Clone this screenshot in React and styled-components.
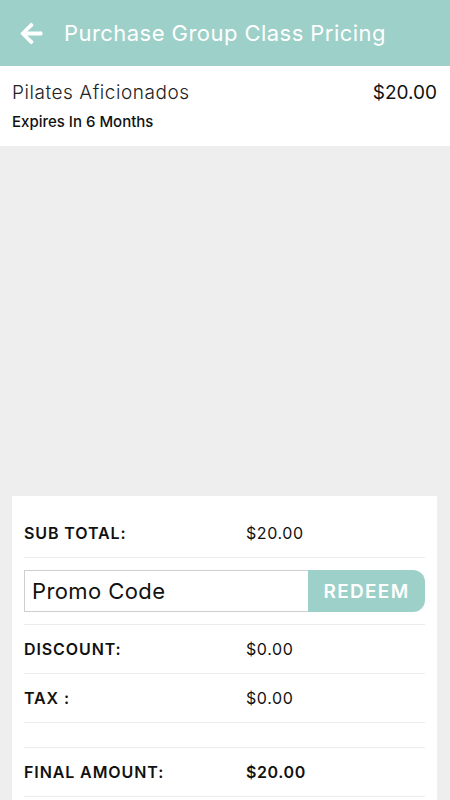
import React from "react";
import styled, { createGlobalStyle } from "styled-components";
import { FaArrowLeft } from "react-icons/fa";

const Global = createGlobalStyle`
  html, body { margin: 0; padding: 0; background: #eeeeee; }
  body { font-family: Inter, "Noto Sans", sans-serif; color: #111; }
  * { box-sizing: border-box; }
`;

const Page = styled.div`
  width: 450px;
  height: 800px;
  background: #eeeeee;
  display: flex;
  flex-direction: column;
  overflow: hidden;
`;

const Header = styled.header`
  height: 66px;
  background: #9dd0c8;
  display: flex;
  align-items: center;
  padding-left: 19px;
  gap: 20px;
  color: #fff;
  flex-shrink: 0;
`;

const BackButton = styled.button`
  border: 0;
  background: none;
  padding: 0;
  color: #fff;
  display: flex;
  align-items: center;
  font-size: 25px;
`;

const Title = styled.h1`
  margin: 0;
  font-size: 22px;
  font-weight: 400;
  letter-spacing: 0.45px;
`;

const Item = styled.section`
  height: 80px;
  background: #fff;
  padding: 15px 13px 0 12px;
  flex-shrink: 0;
`;

const ItemTop = styled.div`
  display: flex;
  justify-content: space-between;
  align-items: baseline;
`;

const ItemName = styled.div`
  font-size: 19px;
  font-weight: 300;
  color: #222;
  letter-spacing: 0.55px;
`;

const ItemPrice = styled.div`
  font-size: 19px;
  font-weight: 400;
  color: #111;
`;

const ItemSub = styled.div`
  margin-top: 8px;
  font-size: 15px;
  font-weight: 500;
  color: #111;
`;

const Spacer = styled.div`
  flex: 1;
`;

const Card = styled.section`
  background: #fff;
  margin: 0 13px 0 12px;
  padding: 12px 12px 0;
  height: 304px;
  flex-shrink: 0;
`;

const Row = styled.div`
  display: grid;
  grid-template-columns: 222px 1fr;
  align-items: center;
  height: ${(p) => p.$h || 50}px;
  border-bottom: 1px solid #ececec;
  font-size: 16px;
`;

const Label = styled.div`
  font-weight: 600;
  color: #111;
  letter-spacing: 0.9px;
`;

const Value = styled.div`
  font-weight: ${(p) => (p.$bold ? 600 : 400)};
  color: #111;
  letter-spacing: 0.6px;
`;

const PromoRow = styled.div`
  height: 67px;
  display: flex;
  align-items: center;
  border-bottom: 1px solid #ececec;
`;

const PromoInput = styled.input`
  flex: 1;
  min-width: 0;
  width: 0;
  height: 42px;
  border: 1px solid #cfcfcf;
  border-right: 0;
  padding: 0 7px;
  font-family: inherit;
  font-size: 22px;
  letter-spacing: 0.4px;
  color: #111;
  outline: none;
  &::placeholder { color: #111; opacity: 1; }
`;

const RedeemButton = styled.button`
  flex-shrink: 0;
  width: 117px;
  height: 42px;
  border: 0;
  border-radius: 0 12px 12px 0;
  background: #9dd0c8;
  color: #fff;
  font-family: inherit;
  font-size: 19px;
  font-weight: 600;
  letter-spacing: 1.3px;
  padding: 0;
`;

export default function App() {
  return (
    <Page>
      <Global />
      <Header>
        <BackButton aria-label="Back">
          <FaArrowLeft />
        </BackButton>
        <Title>Purchase Group Class Pricing</Title>
      </Header>
      <Item>
        <ItemTop>
          <ItemName>Pilates Aficionados</ItemName>
          <ItemPrice>$20.00</ItemPrice>
        </ItemTop>
        <ItemSub>Expires In 6 Months</ItemSub>
      </Item>
      <Spacer />
      <Card>
        <Row>
          <Label>SUB TOTAL:</Label>
          <Value>$20.00</Value>
        </Row>
        <PromoRow>
          <PromoInput placeholder="Promo Code" />
          <RedeemButton>REDEEM</RedeemButton>
        </PromoRow>
        <Row $h={49}>
          <Label>DISCOUNT:</Label>
          <Value>$0.00</Value>
        </Row>
        <Row $h={49}>
          <Label>TAX :</Label>
          <Value>$0.00</Value>
        </Row>
        <Row $h={25} />
        <Row $h={49}>
          <Label>FINAL AMOUNT:</Label>
          <Value $bold>$20.00</Value>
        </Row>
      </Card>
    </Page>
  );
}
